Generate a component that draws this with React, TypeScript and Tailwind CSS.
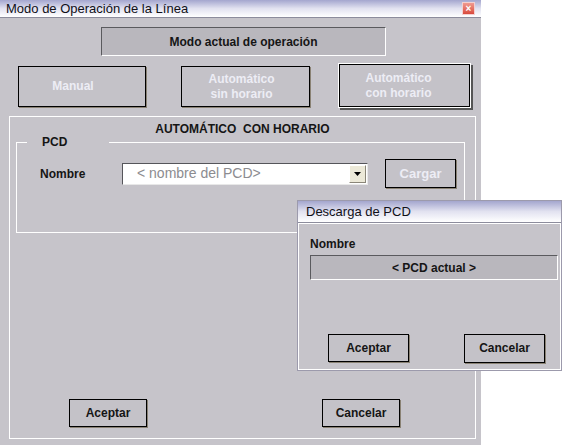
import type { ReactNode } from "react";

const FONT = "font-['Liberation_Sans',Arial,sans-serif]";

function TitleBar({ title, close }: { title: string; close?: boolean }) {
  return (
    <div className="flex h-[18px] items-center justify-between border-b border-[#8c8c9c] bg-gradient-to-b from-[#a4a6ce] via-[#e2e2f0] to-white px-[6px]">
      <span className="text-[13px] leading-none text-[#101018]">{title}</span>
      {close && (
        <span className="flex h-[13px] w-[13px] items-center justify-center border border-[#f4d0d0] bg-gradient-to-b from-[#f09a90] to-[#d8483c] text-[10px] font-bold leading-none text-white">
          ×
        </span>
      )}
    </div>
  );
}

function WinButton({
  children,
  disabled,
  active,
  className = "",
}: {
  children: ReactNode;
  disabled?: boolean;
  active?: boolean;
  className?: string;
}) {
  const frame = active
    ? "border border-black shadow-[0_0_0_1px_#ffffff,2px_2px_0_1px_#555]"
    : "border border-black shadow-[1px_1px_0_#8a8274]";
  return (
    <button
      type="button"
      className={`flex flex-col items-center justify-center bg-[#c4c2c8] text-[12px] font-bold leading-[15px] ${frame} ${
        disabled ? "text-[#ededf5]" : "text-[#151515]"
      } ${className}`}
    >
      {children}
    </button>
  );
}

function Sunken({ children, className = "" }: { children: ReactNode; className?: string }) {
  return (
    <div
      className={`flex items-center justify-center border border-t-[#5a5a5e] border-l-[#5a5a5e] border-b-white border-r-white bg-[#b9b7bd] text-[12px] font-bold text-[#151515] ${className}`}
    >
      {children}
    </div>
  );
}

function DownloadDialog() {
  return (
    <div className="absolute left-[297px] top-[200px] flex h-[171px] w-[265px] flex-col border border-[#9c9aac] bg-[#c6c4ca]">
      <div className="flex h-[22px] items-center border-b border-[#8c8c9c] bg-gradient-to-b from-[#a4a6ce] via-[#e2e2f0] to-white pl-[8px]">
        <span className="text-[13px] leading-none text-[#101018]">Descarga de PCD</span>
      </div>
      <div className="flex flex-1 flex-col border border-white px-[11px]">
        <span className="mt-[13px] text-[12px] font-bold leading-[14px] text-[#151515]">Nombre</span>
        <Sunken className="mt-[4px] h-[25px] w-[248px]">&lt; PCD actual &gt;</Sunken>
        <div className="mt-[54px] flex">
          <WinButton className="ml-[18px] h-[28px] w-[81px]">Aceptar</WinButton>
          <WinButton className="ml-[55px] h-[29px] w-[81px]">Cancelar</WinButton>
        </div>
      </div>
    </div>
  );
}

export default function App() {
  return (
    <div className={`relative flex h-[445px] w-[568px] overflow-hidden bg-white ${FONT}`}>
      <div className="flex h-[445px] w-[481px] flex-col bg-[#c6c4ca]">
        <TitleBar title="Modo de Operación de la Línea" close />
        <Sunken className="ml-[101px] mt-[9px] h-[29px] w-[285px]">Modo actual de operación</Sunken>

        <div className="mt-[8px] flex items-start">
          <WinButton disabled className="ml-[18px] mt-[2px] h-[41px] w-[128px] pr-[18px]">
            Manual
          </WinButton>
          <WinButton disabled className="ml-[35px] mt-[2px] h-[41px] w-[129px] pr-[8px]">
            <span>Automático</span>
            <span>sin horario</span>
          </WinButton>
          <WinButton disabled active className="ml-[29px] h-[43px] w-[131px] pr-[12px]">
            <span>Automático</span>
            <span>con horario</span>
          </WinButton>
        </div>

        <div className="ml-[9px] mt-[9px] flex h-[323px] w-[467px] flex-col border border-white">
          <div className="pt-[5px] text-center text-[12px] font-bold leading-[14px] text-[#151515]">
            AUTOMÁTICO&nbsp; CON HORARIO
          </div>

          <fieldset className="ml-[6px] mt-[-1px] h-[98px] w-[449px] border border-white">
            <legend className="ml-[10px] pl-[15px] pr-[42px] text-[12px] font-bold leading-[14px] text-[#151515]">
              PCD
            </legend>
            <div className="mt-[10px] flex items-center pl-[23px]">
              <span className="w-[82px] text-[12px] font-bold text-[#151515]">Nombre</span>
              <div className="flex h-[22px] w-[246px] items-center justify-between border border-t-[#55555a] border-l-[#55555a] border-b-[#e8e8e8] border-r-[#e8e8e8] bg-white pl-[14px] pr-[1px]">
                <span className="text-[14px] text-[#8c8c90]">&lt; nombre del PCD&gt;</span>
                <span className="flex h-[18px] w-[17px] items-center justify-center border border-t-white border-l-white border-b-[#8a8678] border-r-[#8a8678] bg-[#ece9d8]">
                  <svg width="7" height="4" viewBox="0 0 7 4">
                    <polygon points="0,0 7,0 3.5,4" fill="#000" />
                  </svg>
                </span>
              </div>
              <WinButton disabled className="ml-[17px] h-[29px] w-[71px] text-[13px]">
                Cargar
              </WinButton>
            </div>
          </fieldset>

          <div className="mt-[166px] flex">
            <WinButton className="ml-[59px] h-[28px] w-[78px]">Aceptar</WinButton>
            <WinButton className="ml-[175px] h-[28px] w-[78px]">Cancelar</WinButton>
          </div>
        </div>
      </div>
      <DownloadDialog />
    </div>
  );
}
